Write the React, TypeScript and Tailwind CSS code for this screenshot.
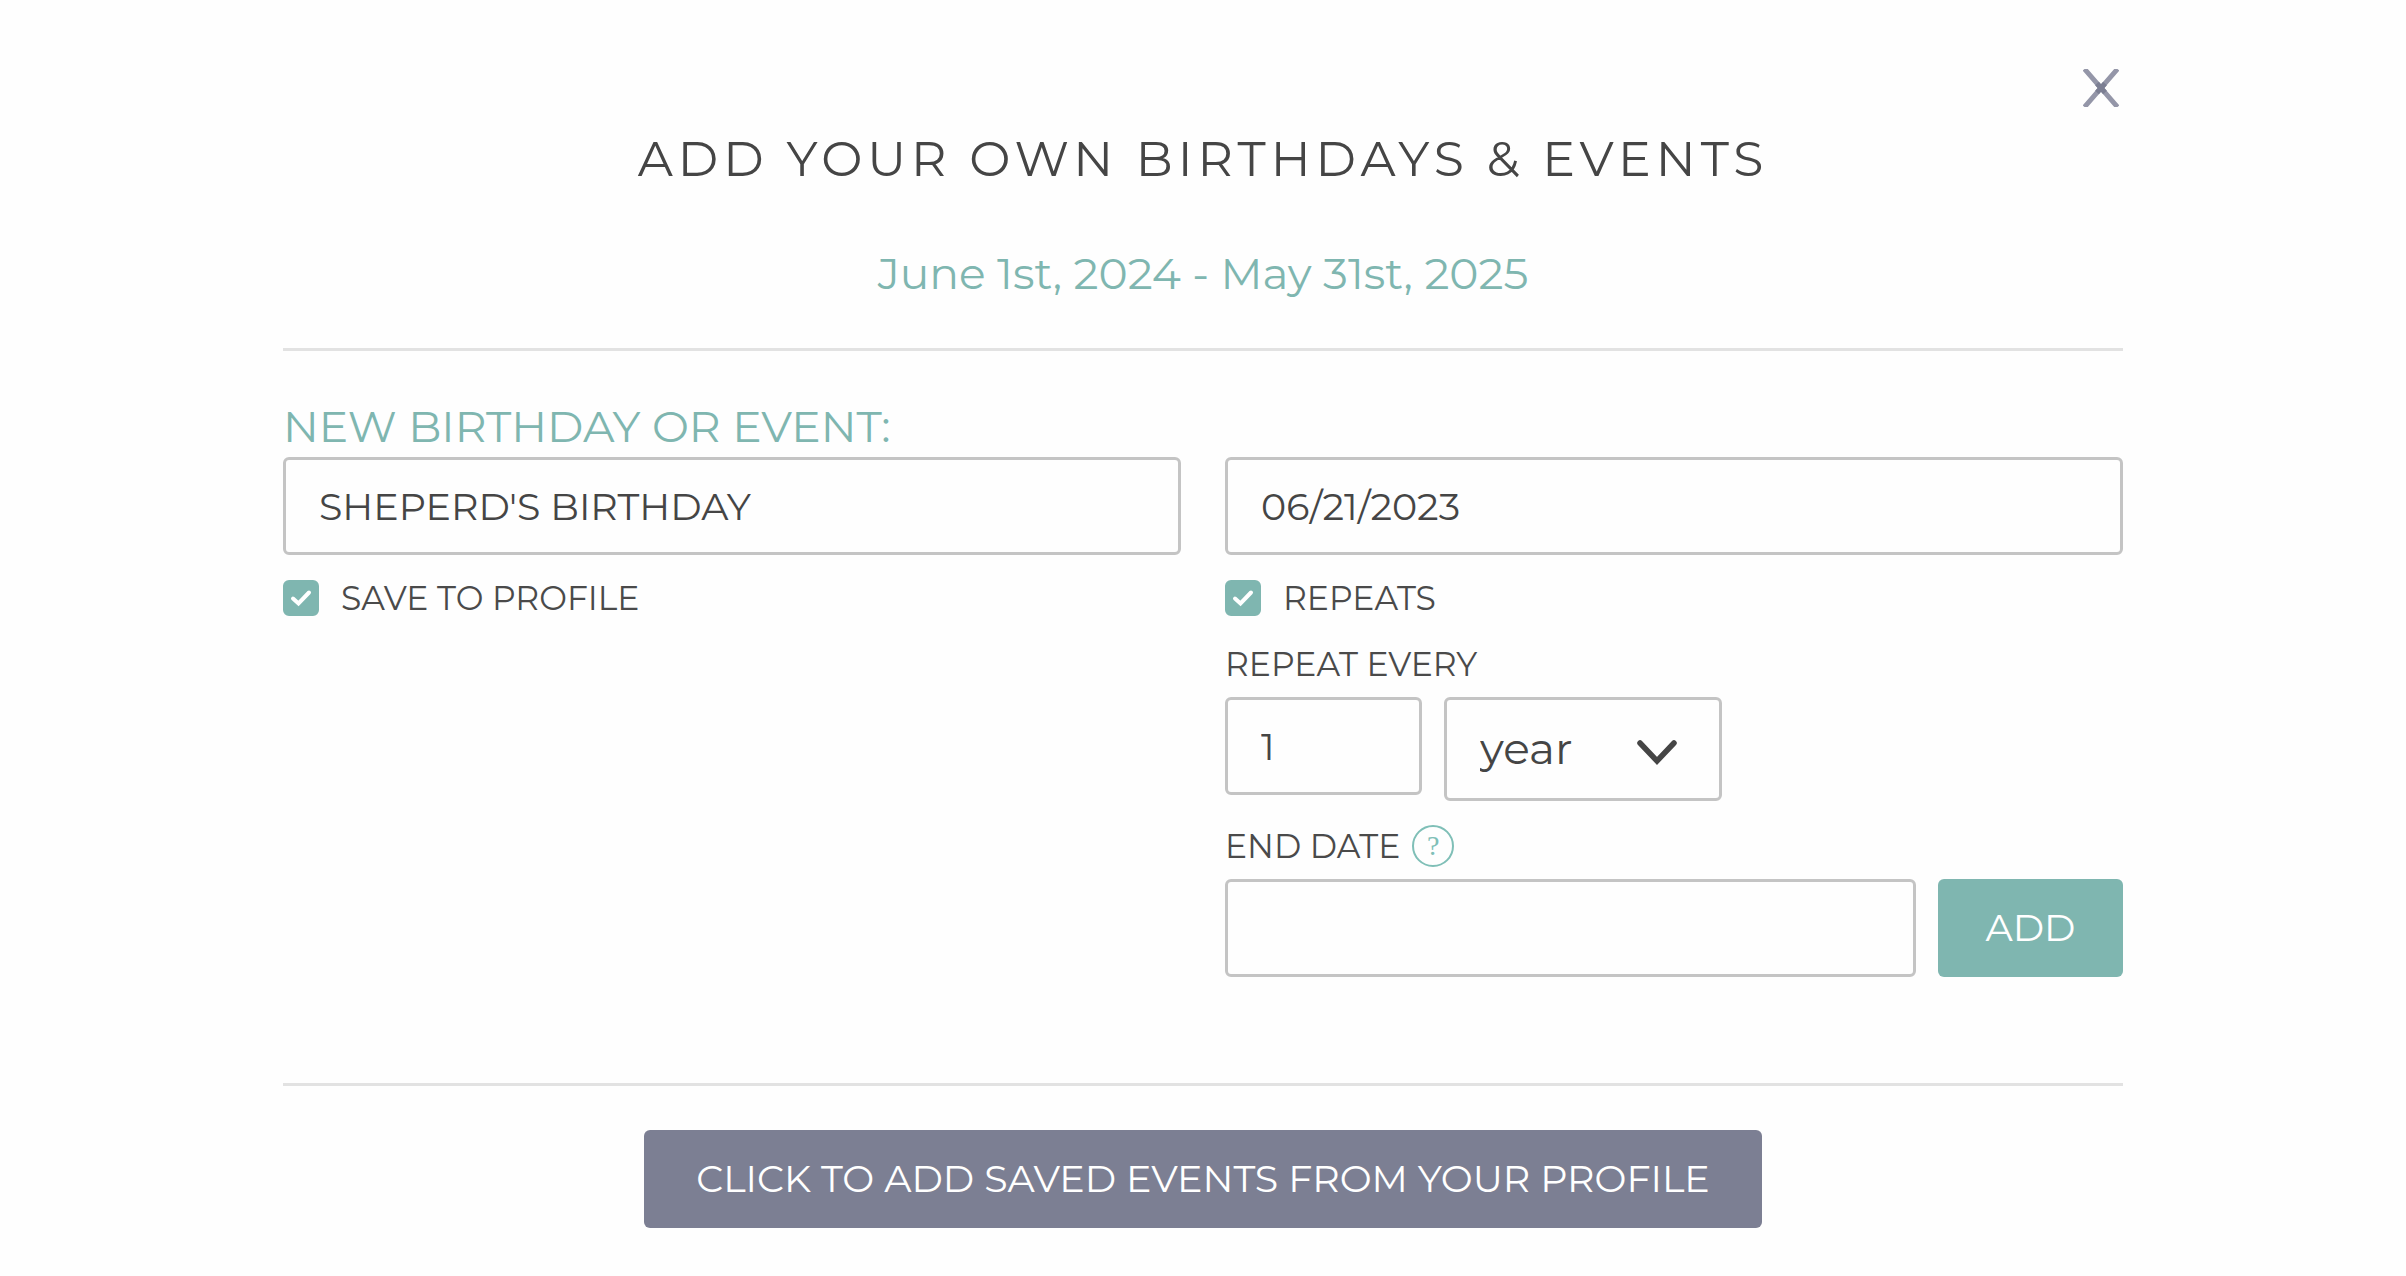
import React, { useState } from 'react';
import { clsx } from 'clsx';

const fieldClass =
  'h-[98px] rounded-md border-3 border-[#c4c4c4] bg-transparent px-[33px] text-[38px] leading-[48px] text-[#454545] outline-none';
const labelClass = 'text-[33px] leading-[42px] text-[#4a4a4a]';

function CheckField({ id, label }: { id: string; label: string }) {
  const [checked, setChecked] = useState(true);

  return (
    <div className="mt-[24px] flex h-[38px] items-center gap-[22px]">
      <span className="relative h-9 w-9 shrink-0">
        <input
          id={id}
          type="checkbox"
          checked={checked}
          onChange={(e) => setChecked(e.target.checked)}
          className={clsx(
            'block h-9 w-9 appearance-none rounded-md border-2',
            checked ? 'border-[#7fb6b0] bg-[#7fb6b0]' : 'border-[#c4c4c4] bg-white'
          )}
        />
        {checked && (
          <svg viewBox="0 0 36 36" className="pointer-events-none absolute inset-0 h-9 w-9" fill="none" aria-hidden="true">
            <path d="M10 18.5 15.5 23.5 26 12.5" stroke="#fff" strokeWidth="4" strokeLinecap="round" />
          </svg>
        )}
      </span>
      <label htmlFor={id} className={labelClass}>{label}</label>
    </div>
  );
}

export default function App() {
  const [name, setName] = useState("SHEPERD'S BIRTHDAY");
  const [date, setDate] = useState('06/21/2023');
  const [count, setCount] = useState('1');
  const [unit, setUnit] = useState('year');
  const [endDate, setEndDate] = useState('');

  return (
    <div className="min-h-screen bg-[#fefefe] px-6 pt-[69px] pb-12 font-['Montserrat','Inter',sans-serif] text-[#454545]">
      <div className="mx-auto max-w-[1840px]">
        <header className="flex flex-col border-b-3 border-[#e2e2e2] pb-[48px] text-center">
          <button type="button" aria-label="Close" className="mr-1 self-end">
            <svg viewBox="0 0 36 38" className="h-[38px] w-9" fill="none" aria-hidden="true">
              <path d="M1.5 0 34.5 38M34.5 0 1.5 38" stroke="#9496a8" strokeWidth="5" />
              <path d="M14 14.5 22 23.5M22 14.5 14 23.5" stroke="#7c7f93" strokeWidth="5" />
            </svg>
          </button>
          <h1 className="mt-[22px] text-[49px] leading-[60px] tracking-[5px]">
            ADD YOUR OWN BIRTHDAYS &amp; EVENTS
          </h1>
          <p className="mt-[57px] text-[44px] leading-[54px] text-[#7fb6b0]">
            June 1st, 2024 - May 31st, 2025
          </p>
        </header>

        <form onSubmit={(e) => e.preventDefault()}>
          <label htmlFor="event-name" className="mt-[48px] block text-[44px] leading-[54px] text-[#7fb6b0]">
            NEW BIRTHDAY OR EVENT:
          </label>

          <div className="mt-[4px] grid grid-cols-2 gap-x-[44px]">
            <div>
              <input
                id="event-name"
                type="text"
                value={name}
                onChange={(e) => setName(e.target.value)}
                className={clsx(fieldClass, 'block w-full')}
              />
              <CheckField id="save" label="SAVE TO PROFILE" />
            </div>

            <div>
              <input
                type="text"
                aria-label="Event date"
                value={date}
                onChange={(e) => setDate(e.target.value)}
                className={clsx(fieldClass, 'block w-full')}
              />
              <CheckField id="repeats" label="REPEATS" />

              <label htmlFor="repeat-count" className={clsx(labelClass, 'mt-[26px] block')}>
                REPEAT EVERY
              </label>
              <div className="mt-[12px] flex items-start gap-[22px]">
                <input
                  id="repeat-count"
                  type="text"
                  value={count}
                  onChange={(e) => setCount(e.target.value)}
                  className={clsx(fieldClass, 'w-[197px]')}
                />
                <div className="relative w-[278px]">
                  <select
                    aria-label="Repeat unit"
                    value={unit}
                    onChange={(e) => setUnit(e.target.value)}
                    className="block h-[104px] w-full appearance-none rounded-md border-3 border-[#c4c4c4] bg-transparent px-[33px] pb-[2px] text-[44px] leading-[54px] text-[#454545] outline-none"
                  >
                    <option value="day">day</option>
                    <option value="week">week</option>
                    <option value="month">month</option>
                    <option value="year">year</option>
                  </select>
                  <svg
                    viewBox="0 0 40 26"
                    className="pointer-events-none absolute top-[43px] right-[45px] h-[26px] w-10"
                    fill="none"
                    aria-hidden="true"
                  >
                    <path d="M3 3 20 21 37 3" stroke="#454545" strokeWidth="5.5" strokeLinecap="round" />
                  </svg>
                </div>
              </div>

              <div className="mt-[24px] flex items-center gap-[12px]">
                <label htmlFor="end-date" className={labelClass}>END DATE</label>
                <button
                  type="button"
                  aria-label="About the end date"
                  className="flex h-[42px] w-[42px] items-center justify-center rounded-full border-2 border-[#7fbfb7] font-['Liberation_Serif',serif] text-[28px] leading-none text-[#7fbfb7]"
                >
                  ?
                </button>
              </div>
              <div className="mt-[12px] flex gap-[22px]">
                <input
                  id="end-date"
                  type="text"
                  value={endDate}
                  onChange={(e) => setEndDate(e.target.value)}
                  className={clsx(fieldClass, 'min-w-0 flex-1')}
                />
                <button type="submit" className="w-[185px] rounded-md bg-[#7fb6b0] text-[38px] leading-[48px] text-white">
                  ADD
                </button>
              </div>
            </div>
          </div>
        </form>

        <footer className="mt-[106px] flex justify-center border-t-3 border-[#e2e2e2] pt-[44px]">
          <button type="button" className="h-[98px] rounded-md bg-[#7c7f93] px-[52px] text-[38px] leading-[48px] text-white">
            CLICK TO ADD SAVED EVENTS FROM YOUR PROFILE
          </button>
        </footer>
      </div>
    </div>
  );
}
